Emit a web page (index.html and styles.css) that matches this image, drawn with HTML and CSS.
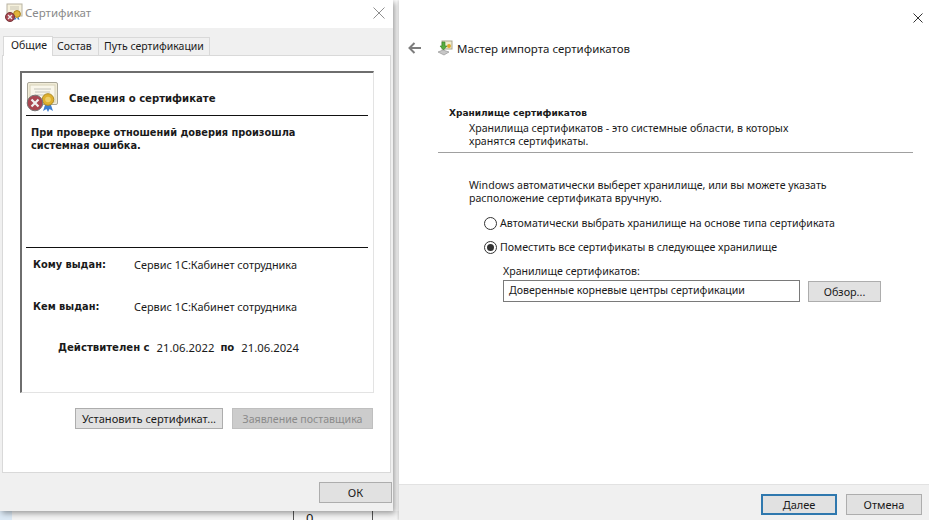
FILE: index.html
```html
<!DOCTYPE html>
<html lang="ru">
<head>
<meta charset="utf-8">
<title>Сертификат</title>
<link rel="stylesheet" href="styles.css">
</head>
<body>
<div class="desktop">
  <div class="under">
    <span class="under-blue"></span>
    <span class="under-cell">0</span>
  </div>

  <section class="win cert">
    <header class="titlebar">
      <svg class="title-icon" width="20" height="20" viewBox="0 0 20 20">
        <rect x="4" y="1" width="15" height="12" fill="#f6f1dc" stroke="#b9b4a4"/>
        <path d="M7 4h9M7 6h9" stroke="#c9c5b5"/>
        <circle cx="14" cy="11" r="3.4" fill="#e2b43a" stroke="#a97f1c"/>
        <path d="M12 14l-1 3 2.5-1M15.500 14l1 3-2.500-1" fill="#3b78c9"/>
        <circle cx="7" cy="14" r="4.500" fill="#a94650" stroke="#77383c"/>
        <path d="M5 12l4 4M9 12l-4 4" stroke="#eee" stroke-width="1.300"/>
      </svg>
      <span class="title-text">Сертификат</span>
      <svg class="close" width="12" height="12" viewBox="0 0 12 12"><path d="M.5.5l11 11M11.500.5l-11 11" stroke="#8f8f8f" fill="none"/></svg>
    </header>

    <div class="tabs">
      <span class="tab active">Общие</span>
      <span class="tab">Состав</span>
      <span class="tab">Путь сертификации</span>
    </div>

    <div class="panel">
      <div class="info">
        <div class="info-head">
          <svg class="cert-icon" width="33" height="32" viewBox="0 0 33 32">
            <rect x="1.500" y="1.500" width="30" height="22" rx="1.500" fill="#f1ecd8" stroke="#a9a698"/>
            <rect x="4" y="4" width="25" height="17" fill="#f9f6ea" stroke="#d8d2b8"/>
            <path d="M8 8h17M9 11h15M9 14h11" stroke="#c4c4bc"/>
            <path d="M19 24l-2 6 3.500-2 1.500 3 1.500-3 3.500 2-2-6z" fill="#3f7fd0"/>
            <circle cx="22" cy="18.500" r="5.800" fill="#dfb02e" stroke="#ae8a20"/>
            <circle cx="22" cy="18.500" r="2.800" fill="#eecf68"/>
            <circle cx="9" cy="22" r="7.800" fill="#a94650" stroke="#777"/>
            <path d="M5.500 18.500l7 7M12.500 18.500l-7 7" stroke="#f1f1f1" stroke-width="2.200"/>
          </svg>
          <h2 class="info-title">Сведения о сертификате</h2>
        </div>
        <p class="info-msg">При проверке отношений доверия произошла<br>системная ошибка.</p>
        <dl class="details">
          <div class="detail"><dt>Кому выдан:</dt><dd>Сервис 1С:Кабинет сотрудника</dd></div>
          <div class="detail"><dt>Кем выдан:</dt><dd>Сервис 1С:Кабинет сотрудника</dd></div>
        </dl>
        <p class="validity"><b>Действителен с</b><span>21.06.2022</span><b>по</b><span>21.06.2024</span></p>
      </div>
      <div class="panel-actions">
        <button class="btn install">Установить сертификат...</button>
        <button class="btn disabled">Заявление поставщика</button>
      </div>
    </div>

    <footer class="cert-foot"><button class="btn ok">ОК</button></footer>
  </section>

  <section class="win wizard">
    <div class="wizard-top">
      <svg class="close" width="10" height="10" viewBox="0 0 10 10"><path d="M.5.5l9 9M9.500.5l-9 9" stroke="#333" fill="none"/></svg>
    </div>
    <div class="wizard-nav">
      <svg class="back" width="14" height="12" viewBox="0 0 14 12"><path d="M13 6H2M6.500 1L1.500 6l5 5" stroke="#7d7d7d" stroke-width="2" fill="none"/></svg>
      <svg class="wizard-icon" width="16" height="16" viewBox="0 0 16 16">
        <rect x="5" y="1" width="10" height="8" fill="#f3eecf" stroke="#a9a58e"/>
        <circle cx="12" cy="6" r="2" fill="#dfa92c"/>
        <path d="M1 12l5-2 6 2-5 3z" fill="#c7c7c7" stroke="#8b8b8b" stroke-width=".6"/>
        <path d="M5 2l3 0v4l2 0-3.500 4L3 6l2 0z" fill="#58ad3e" stroke="#37802a" stroke-width=".6"/>
      </svg>
      <span class="wizard-title">Мастер импорта сертификатов</span>
    </div>
    <div class="store-head">
      <h3 class="store-title">Хранилище сертификатов</h3>
      <p class="store-desc">Хранилища сертификатов - это системные области, в которых<br>хранятся сертификаты.</p>
    </div>
    <div class="store-body">
      <p class="store-intro">Windows автоматически выберет хранилище, или вы можете указать<br>расположение сертификата вручную.</p>
      <div class="radio-row"><span class="radio"></span>Автоматически выбрать хранилище на основе типа сертификата</div>
      <div class="radio-row second"><span class="radio on"></span>Поместить все сертификаты в следующее хранилище</div>
      <div class="store-pick">
        <div class="pick-label">Хранилище сертификатов:</div>
        <div class="pick-row">
          <div class="pick-input">Доверенные корневые центры сертификации</div>
          <button class="btn browse">Обзор...</button>
        </div>
      </div>
    </div>
    <footer class="wizard-foot">
      <button class="btn next">Далее</button>
      <button class="btn cancel">Отмена</button>
    </footer>
  </section>
</div>
</body>
</html>
```
FILE: styles.css
```css
* { box-sizing: border-box; }
html, body { margin: 0; padding: 0; }
body {
  width: 929px;
  height: 520px;
  overflow: hidden;
  background: #fff;
  font-family: "Noto Sans", "Open Sans", sans-serif;
  font-size: 10.6px;
  color: #1a1a1a;
}
h2, h3, p, dl, dd { margin: 0; }
.desktop { position: relative; width: 929px; height: 520px; overflow: hidden; }

.under {
  position: absolute;
  left: 0; right: 0; bottom: 0;
  height: 9px;
  display: flex;
  background: #f4f4f4;
}
.under-blue { width: 12px; background: #dce9f5; }
.under-cell {
  margin-left: 281px;
  width: 80px;
  padding-left: 12px;
  border-left: 1px solid #555;
  border-right: 1px solid #555;
  font-size: 13px;
  line-height: 15px;
}

.win { position: absolute; top: 0; background: #fff; display: flex; flex-direction: column; }
.cert {
  left: 0;
  width: 393px;
  height: 511px;
  background: #f0f0f0;
  box-shadow: 2px 2px 6px rgba(0, 0, 0, .4);
}
.wizard { left: 399px; width: 530px; height: 520px; box-shadow: -1px 0 2px rgba(0, 0, 0, .15); }

.titlebar {
  height: 28px;
  background: #fff;
  display: flex;
  align-items: center;
  padding: 0 7px 3px 3px;
  flex: none;
}
.title-icon { flex: none; }
.title-text { margin-left: 2px; font-size: 11.500px; color: #8a8a8a; flex: 1; }
.titlebar .close { margin-right: 1px; }

.tabs { display: flex; align-items: flex-end; height: 27px; padding-left: 3px; flex: none; }
.tab {
  height: 18px;
  line-height: 16px;
  padding: 0 0 0 4px;
  margin-right: -1px;
  background: #f0f0f0;
  border: 1px solid #d9d9d9;
  border-bottom: 0;
  font-size: 10.500px;
}
.tab.active {
  width: 50px;
  height: 20px;
  line-height: 16px;
  padding: 0 0 0 7px;
  background: #fff;
  margin-bottom: -1px;
  position: relative;
  z-index: 1;
}
.tab:nth-child(2) { width: 47px; }
.tab:nth-child(3) { width: 112px; padding-left: 5px; }

.panel {
  margin: 0 2px 0 2px;
  height: 418px;
  background: #fff;
  border: 1px solid #d9d9d9;
  padding: 15px 16px 0 17px;
  flex: none;
}
.info {
  height: 322px;
  border: 1px solid #e3e3e3;
  border-top: 2px solid #6e6e6e;
  border-left: 2px solid #6e6e6e;
  padding: 6px 5px 0 4px;
}
.info-head {
  display: flex;
  align-items: center;
  height: 37px;
  border-bottom: 1px solid #111;
  padding-left: 1px;
}
.cert-icon { margin-left: -1px; }
.info-title {
  margin-left: 10px;
  margin-top: 2px;
  font-family: "DejaVu Sans", sans-serif;
  font-weight: 700;
  font-size: 10.100px;
}
.info-msg {
  height: 132px;
  padding: 10px 0 0 5px;
  border-bottom: 1px solid #111;
  font-family: "DejaVu Sans", sans-serif;
  font-weight: 700;
  font-size: 9.800px;
  line-height: 13px;
}
.details { padding-left: 7px; }
.detail { display: flex; height: 42px; padding-top: 9px; line-height: 16px; font-size: 10.900px; }
.detail dt { width: 101px; font-family: "DejaVu Sans", sans-serif; font-weight: 700; font-size: 9.800px; }
.validity {
  display: flex;
  padding-left: 32px;
  margin-top: 8px;
  line-height: 16px;
  font-size: 11.300px;
}
.validity b { font-family: "DejaVu Sans", sans-serif; font-size: 10.100px; }
.validity span { margin: 0 6px 0 7px; }

.panel-actions { display: flex; justify-content: flex-end; gap: 9px; padding: 15px 1px 0 0; }
.btn {
  font: inherit;
  font-size: 11.100px;
  color: #1a1a1a;
  height: 21px;
  padding: 0;
  background: #e1e1e1;
  border: 1px solid #adadad;
}
.install { width: 148px; }
.disabled { width: 141px; background: #ccc; border-color: #bfbfbf; color: #8a8a8a; font-size: 10.600px; }

.cert-foot { flex: 1; display: flex; justify-content: flex-end; padding: 9px 1px 0 0; }
.ok { width: 73px; height: 21px; margin-right: 0; }

.wizard-top { height: 34px; padding: 13px 6px 0 0; display: flex; justify-content: flex-end; flex: none; }
.wizard-nav { display: flex; align-items: center; height: 28px; padding: 0 0 0 9px; flex: none; }
.wizard-icon { margin-left: 15px; }
.wizard-title { margin-left: 4px; font-size: 11.500px; }

.store-head {
  margin: 45px 16px 0 39px;
  height: 46px;
  border-bottom: 1px solid #a0a0a0;
  flex: none;
}
.store-title { padding-left: 11px; font-weight: 700; line-height: 12px; font-family: "DejaVu Sans", sans-serif; font-size: 9px; }
.store-desc { padding: 3px 0 0 31px; line-height: 13px; }
.store-body { flex: 1; padding: 26px 0 0 70px; }
.store-intro { line-height: 13px; }
.radio-row { display: flex; align-items: center; height: 16px; margin: 10px 0 0 15px; }
.radio-row.second { margin-top: 8px; }
.radio {
  width: 13px;
  height: 13px;
  border: 1px solid #333;
  border-radius: 50%;
  background: #fff;
  margin-right: 3px;
  display: flex;
  align-items: center;
  justify-content: center;
}
.radio.on::after { content: ""; width: 7px; height: 7px; border-radius: 50%; background: #333; }
.store-pick { padding: 8px 0 0 34px; }
.pick-label { line-height: 16px; }
.pick-row { display: flex; gap: 8px; margin-top: 1px; align-items: center; }
.pick-input {
  width: 297px;
  height: 22px;
  border: 1px solid #7a7a7a;
  line-height: 19px;
  padding-left: 5px;
}
.browse { width: 73px; font-size: 10.800px; }
.wizard-foot {
  height: 36px;
  background: #f0f0f0;
  border-top: 1px solid #e2e2e2;
  display: flex;
  justify-content: flex-end;
  gap: 9px;
  padding: 9px 7px 0 0;
  flex: none;
}
.next, .cancel { width: 76px; height: 21px; font-size: 11px; }
.next { border: 2px solid #2f78ae; }
```
